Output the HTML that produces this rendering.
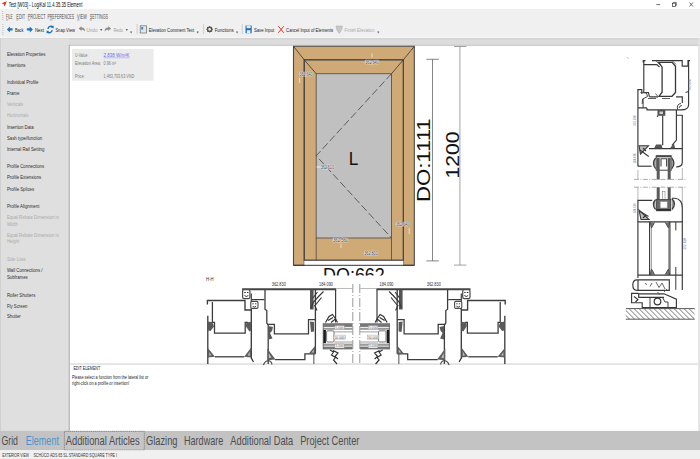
<!DOCTYPE html>
<html><head><meta charset="utf-8"><style>
html,body{margin:0;padding:0;width:700px;height:459px;overflow:hidden;background:#fff}
svg{display:block;font-family:"Liberation Sans",sans-serif}
</style></head><body>
<svg width="700" height="459" viewBox="0 0 700 459">
<rect x="0" y="0" width="700" height="459" fill="#ffffff"/>
<rect x="0" y="0" width="700" height="9" fill="#ffffff"/>
<path d="M1.5 3.2 L6.8 1.2 L4.6 6.8 L3.9 4.2 Z" fill="#e8321e"/>
<line x1="656.3" y1="4.6" x2="660.1" y2="4.6" stroke="#333" stroke-width="0.7"/>
<rect x="672.4" y="3.2" width="3.2" height="3.2" fill="none" stroke="#333" stroke-width="0.7"/><path d="M673.4 3.2 V2.4 H676.4 V5.4 H675.6" fill="none" stroke="#333" stroke-width="0.6"/>
<path d="M689.5 2.5 L693 6.5 M693 2.5 L689.5 6.5" stroke="#333" stroke-width="0.7"/>
<rect x="0" y="9" width="700" height="29" fill="#f0f0f0"/>
<rect x="2.2" y="11" width="1" height="1" fill="#b8b8b8"/>
<rect x="2.2" y="13" width="1" height="1" fill="#b8b8b8"/>
<rect x="2.2" y="15" width="1" height="1" fill="#b8b8b8"/>
<rect x="2.2" y="17" width="1" height="1" fill="#b8b8b8"/>
<rect x="2.2" y="19" width="1" height="1" fill="#b8b8b8"/>
<rect x="2.4" y="24" width="1" height="1" fill="#b8b8b8"/>
<rect x="2.4" y="26" width="1" height="1" fill="#b8b8b8"/>
<rect x="2.4" y="28" width="1" height="1" fill="#b8b8b8"/>
<rect x="2.4" y="30" width="1" height="1" fill="#b8b8b8"/>
<rect x="2.4" y="32" width="1" height="1" fill="#b8b8b8"/>
<rect x="2.4" y="34" width="1" height="1" fill="#b8b8b8"/>
<rect x="6" y="19.7" width="2.2" height="0.55" fill="#666"/>
<rect x="16.3" y="19.7" width="2.1" height="0.55" fill="#666"/>
<rect x="27.8" y="19.7" width="2.4" height="0.55" fill="#666"/>
<rect x="49.8" y="19.7" width="2.6" height="0.55" fill="#666"/>
<rect x="77.1" y="19.7" width="2.5" height="0.55" fill="#666"/>
<rect x="89.7" y="19.7" width="2.3" height="0.55" fill="#666"/>
<path d="M6.9 29.4 L10 26.4 V28.3 H12.6 V30.5 H10 V32.4 Z" fill="#1e73be"/>
<path d="M32.9 29.4 L29.8 26.4 V28.3 H26.9 V30.5 H29.8 V32.4 Z" fill="#1e73be"/>
<path d="M48 29 A3 3 0 0 1 53 27" fill="none" stroke="#1e73be" stroke-width="1.4"/><path d="M53.5 25.4 L53.6 28.4 L50.8 27.6 Z" fill="#1e73be"/><path d="M52.2 30.2 A3 3 0 0 1 47.2 32" fill="none" stroke="#1e73be" stroke-width="1.4"/><path d="M46.6 33.4 L46.6 30.6 L49.4 31.4 Z" fill="#1e73be"/>
<path d="M78.6 28.5 L81.5 26.2 V27.6 C84 27.6 85.2 29 85 31.8 C84.3 30.2 83.2 29.8 81.5 29.8 V31 Z" fill="#8e8e8e"/>
<path d="M100 29.3 L102.4 29.3 L101.2 30.8 Z" fill="#333"/>
<path d="M111.1 28.5 L108.2 26.2 V27.6 C105.7 27.6 104.5 29 104.7 31.8 C105.4 30.2 106.5 29.8 108.2 29.8 V31 Z" fill="#8e8e8e"/>
<path d="M125.6 29.3 L128 29.3 L126.8 30.8 Z" fill="#333"/>
<path d="M130.2 32.2 L132 32.2 L131.1 33.4 Z" fill="#444"/><rect x="130.3" y="31.2" width="1.6" height="0.5" fill="#444"/>
<g fill="#c4c4c4"><rect x="136.7" y="24" width="0.8" height="10"/></g>
<rect x="140.2" y="25.8" width="6.4" height="7.2" fill="#dfe8f0" stroke="#6a6a6a" stroke-width="0.7"/><rect x="141.2" y="27" width="2" height="2.6" fill="#2e8fd8"/>
<path d="M196.8 32.2 L198.6 32.2 L197.7 33.4 Z" fill="#444"/><rect x="196.9" y="31.2" width="1.6" height="0.5" fill="#444"/>
<rect x="203.3" y="24" width="0.8" height="10" fill="#c4c4c4"/>
<g transform="translate(209.6 29.3)" fill="#555"><rect x="-0.55" y="-3.2" width="1.1" height="1.4" transform="rotate(0)"/><rect x="-0.55" y="-3.2" width="1.1" height="1.4" transform="rotate(45)"/><rect x="-0.55" y="-3.2" width="1.1" height="1.4" transform="rotate(90)"/><rect x="-0.55" y="-3.2" width="1.1" height="1.4" transform="rotate(135)"/><rect x="-0.55" y="-3.2" width="1.1" height="1.4" transform="rotate(180)"/><rect x="-0.55" y="-3.2" width="1.1" height="1.4" transform="rotate(225)"/><rect x="-0.55" y="-3.2" width="1.1" height="1.4" transform="rotate(270)"/><rect x="-0.55" y="-3.2" width="1.1" height="1.4" transform="rotate(315)"/><circle r="2.1" fill="none" stroke="#555" stroke-width="1.4"/></g>
<path d="M236.2 32.2 L238 32.2 L237.1 33.4 Z" fill="#444"/><rect x="236.3" y="31.2" width="1.6" height="0.5" fill="#444"/>
<rect x="241.8" y="24" width="0.8" height="10" fill="#c4c4c4"/>
<rect x="245.5" y="25.6" width="6.2" height="7.6" rx="0.4" fill="#1e6fb8"/><rect x="246.6" y="25.6" width="4" height="2.6" fill="#e8eef5"/><rect x="246.8" y="30.2" width="3.6" height="3" fill="#e8eef5"/>
<path d="M278.3 26.2 L283.8 32.8 M283.8 26.2 L278.3 32.8" stroke="#e03a2a" stroke-width="1"/>
<path d="M336 26 L342.4 26 L341.6 30 L339.2 33.4 L336.8 30 Z" fill="#c8c8c8" stroke="#aaa" stroke-width="0.5"/>
<path d="M377.4 32.2 L379.2 32.2 L378.3 33.4 Z" fill="#444"/><rect x="377.5" y="31.2" width="1.6" height="0.5" fill="#444"/>
<rect x="0" y="37.8" width="700" height="7.8" fill="#dcdcdc"/>
<rect x="0" y="36.7" width="700" height="1" fill="#f8f8f8"/>
<rect x="0" y="38.3" width="700" height="1.1" fill="#d0d0d0"/>
<rect x="69" y="44.9" width="630" height="1" fill="#b4b4b4"/>
<rect x="0" y="38.5" width="69.5" height="392.5" fill="#dfdfdf"/>
<rect x="0" y="38.5" width="1" height="392.5" fill="#d0d0d0"/>
<rect x="68.8" y="44.9" width="1.1" height="386.1" fill="#a4a4a4"/>
<rect x="69.8" y="45.7" width="628.4" height="385.3" fill="#ffffff"/>
<rect x="698.2" y="38" width="1.8" height="393" fill="#e2e2e2"/>
<rect x="72" y="48.9" width="81.6" height="31.8" fill="#ebebeb"/>
<line x1="103.6" y1="57.8" x2="129.6" y2="57.8" stroke="#8a8af5" stroke-width="0.45"/>
<rect x="69.8" y="363.4" width="628.4" height="1.3" fill="#d8d8d8"/>
<rect x="0" y="430.9" width="700" height="19.4" fill="#c3c3c3"/>
<rect x="64.4" y="431.4" width="79.9" height="18.8" fill="#c6c6c6" stroke="#6a6a6a" stroke-width="0.7" stroke-dasharray="1.2 0.7"/>
<rect x="0" y="450.3" width="700" height="8.7" fill="#f0f0f0"/>
<path d="M293.5 46.3 H414.3 V265.3 H403.3 V59.9 H304.3 V265.3 H293.5 Z" fill="#d0aa76" stroke="#484848" stroke-width="1.1"/>
<rect x="304.3" y="260.2" width="99" height="5.1" fill="#ffffff"/>
<line x1="293.5" y1="265.3" x2="414.3" y2="265.3" stroke="#333" stroke-width="1"/>
<rect x="304.3" y="59.9" width="99" height="200.3" fill="#d0aa76" stroke="#484848" stroke-width="1.3"/>
<rect x="316.2" y="73.7" width="75.3" height="164.3" fill="#c0c0c0" stroke="#555" stroke-width="0.9"/>
<path d="M316.2 238 V260.2 M391.5 238 V260.2" stroke="#484848" stroke-width="0.8"/>
<path d="M293.5 46.3 L304.3 59.9 M414.3 46.3 L403.3 59.9 M304.3 59.9 L316.2 73.7 M403.3 59.9 L391.5 73.7" stroke="#333" stroke-width="0.8"/>
<path d="M391.5 73.7 L316.2 155.8 L391.5 238" fill="none" stroke="#444" stroke-width="0.8" stroke-dasharray="7.5 3"/>
<line x1="372" y1="53.5" x2="372" y2="57.5" stroke="#fff" stroke-width="0.6"/>
<line x1="299.6" y1="78" x2="299.6" y2="83" stroke="#fff" stroke-width="0.6"/>
<line x1="316.5" y1="167" x2="320.5" y2="167" stroke="#fff" stroke-width="0.8"/>
<line x1="409.2" y1="228" x2="409.2" y2="234" stroke="#fff" stroke-width="0.6"/>
<line x1="341" y1="243.5" x2="341" y2="248" stroke="#fff" stroke-width="0.6"/>
<path d="M432.5 59.3 V260.9 M426.4 59.3 H438.8 M426.4 260.9 H438.8" stroke="#666" stroke-width="0.8"/>
<path d="M459.9 46.5 V265.1 M454 46.5 H466.4 M454 265.1 H466.4" stroke="#8a8a8a" stroke-width="0.8"/>
<defs><clipPath id="c662"><rect x="300" y="262" width="100" height="13.6"/></clipPath></defs>
<g id="hhL"><path d="M207.4 304.6 V300.5 H245 V310 H251.3 V358 L253.5 362" fill="none" stroke="#3c3c3c" stroke-width="1.36"/>
<path d="M207.8 315.8 V364" fill="none" stroke="#3c3c3c" stroke-width="1.32"/>
<path d="M212.4 302 V322.3 H214.5 V333.2 H245.2 V322.5 H248" fill="none" stroke="#3c3c3c" stroke-width="1.28"/>
<path d="M214.9 356.8 H244.3" fill="none" stroke="#3c3c3c" stroke-width="1.28"/>
<path d="M207.8 321.5 L212.4 322.3 L214 326.5 L210.5 331 L208 330.5 Z M251.2 321.8 L246.6 322.5 L245.6 326 L249.4 331.5 L251.2 330.5 Z" fill="#5a5a5a"/>
<path d="M207.8 348 L215 356.8 L207.8 357.6 Z M251.2 347.5 L244.2 356.8 L251.2 357.6 Z" fill="#5e5e5e"/>
<path d="M209.2 352 L211.5 355.5 L209.2 355.8 Z M249.8 351.5 L247.6 355.4 L249.8 355.8 Z" fill="#bdbdbd"/>
<path d="M242.1 289.3 H336.2" stroke="#444" stroke-width="2"/>
<rect x="242.6" y="289.6" width="7.3" height="9" rx="1.6" fill="#fff" stroke="#4a4a4a" stroke-width="1.2"/>
<path d="M244.2 292.5 h1.6 M247 292.5 h1.4 M244.5 295.5 Q246.2 297.5 248.3 295.5" fill="none" stroke="#333" stroke-width="1"/>
<path d="M251.3 293.6 V310" stroke="#3c3c3c" stroke-width="1.2"/>
<rect x="250.8" y="301.4" width="7.2" height="7" rx="1.2" fill="#fff" stroke="#4a4a4a" stroke-width="1.1"/>
<path d="M252.4 303.8 h1.4 M255 303.8 h1.4 M252.6 306.2 Q254.3 308 256.2 306.2" fill="none" stroke="#333" stroke-width="0.9"/>
<path d="M251.3 299.6 H264.4" stroke="#3c3c3c" stroke-width="1.2"/>
<path d="M265 289.5 V309.2 L266.8 310.5 V323 L268.2 325 V364" fill="none" stroke="#3c3c3c" stroke-width="1.28"/>
<path d="M315.4 289 V353.8" stroke="#3c3c3c" stroke-width="1.32"/>
<path d="M313.8 353.8 V364" stroke="#777" stroke-width="1.3"/>
<path d="M267.3 324.4 H274.4 V333.8 H308.5 V319.6 H315.4" fill="none" stroke="#3c3c3c" stroke-width="1.28"/>
<path d="M268.5 326 L273 327 L272 331 L270 333 L272.5 338.5 L268.5 339.5 Z M310 321.5 L314 322 L314 331.5 L311 332 L310.5 327 Z" fill="#5a5a5a"/>
<path d="M274.9 359.6 H304.9 V353.8 H315.4" fill="none" stroke="#3c3c3c" stroke-width="1.28"/>
<path d="M267.3 348.5 L275.5 359.6 L267.3 360.3 Z M315.4 345.6 L308.6 353.8 L315.4 353.8 Z" fill="#5e5e5e"/>
<path d="M268.8 353 L271.5 357.8 L268.8 358 Z M313.8 349.5 L311.5 352.6 L313.8 352.6 Z" fill="#c0c0c0"/>
<path d="M263.5 365 Q265 360.5 268.5 360.8 Q271.5 361 272 364.5" fill="none" stroke="#444" stroke-width="1.1"/>
<path d="M310 290 H313.6 V309.5 H310 Z" fill="#555"/>
<path d="M311 308 L313.5 302 L319 296 L323.5 291.5 M313 298 L317.5 292 M315.5 305 L321.5 297.5 M317 310.5 L314.5 305" fill="none" stroke="#3a3a3a" stroke-width="1.2"/>
<path d="M335.6 289.5 V322.6" stroke="#3c3c3c" stroke-width="1.2"/>
<rect x="323.2" y="323.2" width="29.4" height="26.2" fill="#fff"/>
<rect x="323.2" y="323.2" width="29.4" height="3.7" fill="#777"/><rect x="323.2" y="327.8" width="29.4" height="2" fill="#9a9a9a"/>
<rect x="323.2" y="343.6" width="29.4" height="2.2" fill="#9a9a9a"/><rect x="323.2" y="346.6" width="29.4" height="2.8" fill="#777"/>
<rect x="334.2" y="331" width="18.4" height="1.6" fill="#c4c4c4"/><rect x="334.2" y="341.2" width="18.4" height="1.6" fill="#c4c4c4"/>
<rect x="323.2" y="330" width="2.7" height="13.1" fill="#1a1a1a"/>
<rect x="326.6" y="330.8" width="7.4" height="11.2" rx="1.2" fill="#fff" stroke="#666" stroke-width="0.9"/>
<path d="M323.2 323.2 V349.4" stroke="#555" stroke-width="0.8"/>
<path d="M325.5 322.5 L329 316.5 L332.5 314.5 L335 318 L337.5 322.5 M328 320.5 L333 317.5 M331 322.5 L335.5 319" fill="none" stroke="#333" stroke-width="1.2"/>
<path d="M330 350 L333.5 352 L331.5 355 L335.5 357.5 L333.5 360 L337 364 M333 350.5 L338 353 L335 356.5 L338 359" fill="none" stroke="#333" stroke-width="1.2"/>
<path d="M336.2 288.5 H352.4" stroke="#aaa" stroke-width="0.8"/>
<path d="M352.8 284 V364" stroke="#999" stroke-width="1" stroke-dasharray="9 2 1 2"/></g>
<use href="#hhL" transform="matrix(-1 0 0 1 712.6 0)"/>
<rect x="334.9" y="325.6" width="9.4" height="4" fill="#fff" stroke="#888" stroke-width="0.4"/>
<rect x="333.9" y="335.1" width="11.4" height="4" fill="#fff" stroke="#888" stroke-width="0.4"/>
<rect x="334.9" y="344.0" width="9.4" height="4" fill="#fff" stroke="#888" stroke-width="0.4"/>
<rect x="368.3" y="325.6" width="9.4" height="4" fill="#fff" stroke="#888" stroke-width="0.4"/>
<rect x="367.3" y="335.1" width="11.4" height="4" fill="#fff" stroke="#888" stroke-width="0.4"/>
<rect x="368.3" y="344.0" width="9.4" height="4" fill="#fff" stroke="#888" stroke-width="0.4"/>
<path d="M643.2 62.6 V60.6 H645.5 M652 60.6 H682.2 V66.1 H688 V60.6 H690 M688.6 60.6 V104.7 Q688.6 109.9 681 109.9 H647 V107.9" fill="none" stroke="#383838" stroke-width="1.15"/>
<path d="M643.8 60.6 V92.5 H648.5 L649.5 96.8" fill="none" stroke="#383838" stroke-width="1.15"/>
<path d="M643.8 64.6 H656.8 L659.5 67" fill="none" stroke="#383838" stroke-width="1.15"/>
<path d="M658.8 62.4 H672.1 L675.5 66.2 V92.5 L672 96.3 H659 L662.1 92.2 V67.2 Z" fill="none" stroke="#383838" stroke-width="1.3"/>
<path d="M656 60.8 L660 65 M657.5 96 L655.5 93.5 M672.5 61 L676 64.5" stroke="#555" stroke-width="0.9"/>
<path d="M649.5 96.8 H658 M676 96.8 H682.3 V103" fill="none" stroke="#383838" stroke-width="1.15"/>
<path d="M685.5 92.5 L688.5 91.5" stroke="#444" stroke-width="1.2"/>
<path d="M648 98.5 H656 M662 98.5 H670" stroke="#383838" stroke-width="0.8"/>
<path d="M677.5 109.5 Q676.5 104 681 103.5 M679 108 Q679.5 105.5 682 105.5" fill="none" stroke="#444" stroke-width="1"/>
<path d="M637.9 166.2 V89.6 H641.8 V94 M637.9 107.9 H647" fill="none" stroke="#383838" stroke-width="1.15"/>
<path d="M640.5 92.5 L646.5 93 L647.5 96.5 L642.5 99 L642.2 104 M643.1 99 V107.9" fill="none" stroke="#444" stroke-width="1"/>
<path d="M657.5 110 H665.3 V115.8 H657.5 Z" fill="#505050"/><rect x="659.5" y="111.5" width="3.5" height="2.6" fill="#cfcfcf"/>
<path d="M662.7 115.5 V145.3 M657.5 115.5 V117" stroke="#383838" stroke-width="1.15"/>
<path d="M676.4 110 V140 L672 145.3 M676.4 115.2 H682.3 V162.3 Q682.3 167 676 167" fill="none" stroke="#383838" stroke-width="1.15"/>
<path d="M649 148.6 H682.3" stroke="#383838" stroke-width="1.15"/>
<path d="M654.2 148.2 L656 144.5 H661.5 L662.5 148.2 Z M669.9 148.2 L674 143.5 L675.1 148.2 Z" fill="#555"/>
<path d="M639 145.8 L648.5 145.8 L640.5 154 Z" fill="#bdbdbd" stroke="#3a3a3a" stroke-width="1.1"/><path d="M640 150 L648.8 156.5 M643 148 L646 151" stroke="#3a3a3a" stroke-width="1.1"/>
<path d="M637.9 166.2 H651.6" stroke="#383838" stroke-width="1.15"/>
<rect x="656.2" y="155.8" width="15" height="14.4" fill="#fff" stroke="#444" stroke-width="1"/>
<rect x="656.2" y="155.5" width="15" height="1.8" fill="#444"/>
<path d="M661 166.5 V158.8 H666.6 V166.5" fill="none" stroke="#444" stroke-width="1.1"/>
<path d="M655.6 158 Q651.2 163.2 655.6 168.6 M671.8 158 Q676.2 163.2 671.8 168.6" fill="#9a9a9a" stroke="#3a3a3a" stroke-width="1.2"/>
<path d="M658.2 158 V179.4 M669.2 158 V179.4 M658.2 187.2 V209 M669.2 187.2 V209" stroke="#5a5a5a" stroke-width="3"/>
<path d="M637.9 170 V179 M637.9 187.5 V200 M682.3 168 V179 M682.3 187.5 V208" stroke="#888" stroke-width="0.6"/>
<path d="M634 179.4 H686 M634 187.2 H686" stroke="#8a8a8a" stroke-width="0.7" stroke-dasharray="5 1.4 1 1.4"/>
<rect x="662.4" y="191.5" width="2.6" height="8.5" fill="#fff" stroke="#888" stroke-width="0.6"/>
<rect x="656.6" y="199.5" width="14.2" height="11.3" fill="#6a6a6a" stroke="#444" stroke-width="0.8"/>
<rect x="660.2" y="201.6" width="7" height="6.4" fill="#fff" stroke="#999" stroke-width="0.6"/>
<rect x="656.6" y="209" width="14.2" height="1.8" fill="#2e2e2e"/>
<path d="M655.6 199.5 Q651 204.5 655.6 209.5 M671.8 198.5 Q677 203.5 672 209.5" fill="#9a9a9a" stroke="#3a3a3a" stroke-width="1.2"/>
<path d="M652.2 200.3 H637.9 V278 M672 198.2 H675 Q682.3 199 682.3 208 V290" fill="none" stroke="#383838" stroke-width="1.15"/>
<path d="M639 210 L641 219.5 L649 219.5 Z" fill="#bdbdbd" stroke="#3a3a3a" stroke-width="1.1"/><path d="M639.5 211 L648.5 216.5 M643 218 L646 215" stroke="#3a3a3a" stroke-width="1.1"/>
<path d="M637.9 221.8 H682.3" stroke="#383838" stroke-width="1.15"/>
<path d="M649.6 221.8 V275.1 M669.9 221.8 V275.1" stroke="#383838" stroke-width="1.15"/>
<path d="M650 222 L651.5 228 L654.5 222.5 M669.5 222 L668.5 228 L665.2 222.5 M650 275 L651.5 269 L654.5 274.5 M669.5 275 L668.5 269 L665.2 274.5" fill="#777" stroke="#444" stroke-width="0.9"/>
<path d="M651.5 228 V269 M668.5 228 V269" stroke="#666" stroke-width="0.6"/>
<path d="M675.8 222 V230.4 M675.8 267 V289.8" stroke="#383838" stroke-width="1"/>
<path d="M637.9 275.1 H682.3" stroke="#383838" stroke-width="1.3"/>
<path d="M637 279.8 H669.3 V290.4 H637 Q632.8 290.4 632.8 285 Q632.8 279.8 637 279.8 Z M638 280 V290.4" fill="#fff" stroke="#383838" stroke-width="1.15"/>
<path d="M645.5 283 L646.5 285 M656 282 L659 287.5 L662 283 L665 289 M650 286.5 L652 283" fill="none" stroke="#555" stroke-width="0.9"/>
<path d="M638.7 293.3 H631.6 V302.7 H642.2 V307.6 H676.4 V299.2 L664 293.8 H638.7 V297.4 H664" fill="none" stroke="#383838" stroke-width="1.15"/>
<circle cx="657.5" cy="301.5" r="3.3" fill="#fff" stroke="#383838" stroke-width="1.2"/>
<path d="M650 298 V307.5 M662.8 298 L665 302 H668 V307.5" fill="none" stroke="#444" stroke-width="1"/>
<path d="M634 296.5 L638 299.5 L635.5 302" fill="none" stroke="#333" stroke-width="1.1"/>
<path d="M664 292 L667 289 M660 295 L657.5 292" stroke="#555" stroke-width="0.9"/>
<defs><clipPath id="floor"><rect x="625.8" y="308.6" width="68.8" height="10.6"/></clipPath></defs>
<g clip-path="url(#floor)"><path d="M614.0 308.6 L624.6 319.2 M619.0 308.6 L629.6 319.2 M624.0 308.6 L634.6 319.2 M629.0 308.6 L639.6 319.2 M634.0 308.6 L644.6 319.2 M639.0 308.6 L649.6 319.2 M644.0 308.6 L654.6 319.2 M649.0 308.6 L659.6 319.2 M654.0 308.6 L664.6 319.2 M659.0 308.6 L669.6 319.2 M664.0 308.6 L674.6 319.2 M669.0 308.6 L679.6 319.2 M674.0 308.6 L684.6 319.2 M679.0 308.6 L689.6 319.2 M684.0 308.6 L694.6 319.2 M689.0 308.6 L699.6 319.2 M694.0 308.6 L704.6 319.2" stroke="#4a4a4a" stroke-width="0.75"/></g>
<path d="M625.8 308.6 H694.6 M625.8 319.2 H694.6" stroke="#444" stroke-width="0.9"/>
<path d="M627.2 57.4 L628.4 58.6" stroke="#7a8aa0" stroke-width="0.8"/>
<text x="8.70" y="6.90" font-size="6.6" fill="#0a0a0a" textLength="73.60" lengthAdjust="spacingAndGlyphs" >Test [W03] - LogiKal 11.4.35.35 Element</text>
<text x="6.00" y="19.00" font-size="6.5" fill="#505050" textLength="6.50" lengthAdjust="spacingAndGlyphs" >FILE</text>
<text x="16.30" y="19.00" font-size="6.5" fill="#505050" textLength="8.90" lengthAdjust="spacingAndGlyphs" >EDIT</text>
<text x="27.80" y="19.00" font-size="6.5" fill="#505050" textLength="17.70" lengthAdjust="spacingAndGlyphs" >PROJECT</text>
<text x="47.40" y="19.00" font-size="6.5" fill="#505050" textLength="26.70" lengthAdjust="spacingAndGlyphs" >PREFERENCES</text>
<text x="77.10" y="19.00" font-size="6.5" fill="#505050" textLength="9.80" lengthAdjust="spacingAndGlyphs" >VIEW</text>
<text x="89.70" y="19.00" font-size="6.5" fill="#505050" textLength="18.30" lengthAdjust="spacingAndGlyphs" >SETTINGS</text>
<text x="14.90" y="31.50" font-size="5.8" fill="#1e1e1e" textLength="8.50" lengthAdjust="spacingAndGlyphs" >Back</text>
<text x="34.90" y="31.50" font-size="5.8" fill="#1e1e1e" textLength="9.10" lengthAdjust="spacingAndGlyphs" >Next</text>
<text x="55.40" y="31.50" font-size="5.8" fill="#1e1e1e" textLength="19.50" lengthAdjust="spacingAndGlyphs" >Snap View</text>
<text x="86.60" y="31.50" font-size="5.8" fill="#a0a0a0" textLength="10.80" lengthAdjust="spacingAndGlyphs" >Undo</text>
<text x="113.40" y="31.50" font-size="5.8" fill="#a0a0a0" textLength="9.70" lengthAdjust="spacingAndGlyphs" >Redo</text>
<text x="148.70" y="31.50" font-size="5.8" fill="#1e1e1e" textLength="45.40" lengthAdjust="spacingAndGlyphs" >Elevation Comment Text</text>
<text x="214.70" y="31.50" font-size="5.8" fill="#1e1e1e" textLength="18.90" lengthAdjust="spacingAndGlyphs" >Functions</text>
<text x="253.90" y="31.50" font-size="5.8" fill="#1e1e1e" textLength="20.40" lengthAdjust="spacingAndGlyphs" >Save Input</text>
<text x="286.10" y="31.50" font-size="5.8" fill="#1e1e1e" textLength="47.10" lengthAdjust="spacingAndGlyphs" >Cancel Input of Elements</text>
<text x="344.60" y="31.50" font-size="5.8" fill="#a8a8a8" textLength="30.00" lengthAdjust="spacingAndGlyphs" >Finish Elevation</text>
<text x="75.00" y="57.00" font-size="5.4" fill="#7a7a7a" textLength="13.50" lengthAdjust="spacingAndGlyphs" >U-Value:</text>
<text x="103.60" y="57.00" font-size="5.4" fill="#6a6af0" textLength="26.00" lengthAdjust="spacingAndGlyphs" >2.838 W/m²K</text>
<text x="75.00" y="64.90" font-size="5.4" fill="#7a7a7a" textLength="26.00" lengthAdjust="spacingAndGlyphs" >Elevation Area:</text>
<text x="103.60" y="64.90" font-size="5.4" fill="#7a7a7a" textLength="12.40" lengthAdjust="spacingAndGlyphs" >0.96 m²</text>
<text x="75.00" y="78.40" font-size="5.4" fill="#7a7a7a" textLength="9.50" lengthAdjust="spacingAndGlyphs" >Price:</text>
<text x="103.60" y="78.40" font-size="5.4" fill="#7a7a7a" textLength="30.50" lengthAdjust="spacingAndGlyphs" >1,463,703.63 VND</text>
<text x="6.90" y="55.60" font-size="6.1" fill="#2e2e2e" textLength="38.43" lengthAdjust="spacingAndGlyphs" >Elevation Properties</text>
<text x="6.90" y="67.00" font-size="6.1" fill="#2e2e2e" textLength="18.62" lengthAdjust="spacingAndGlyphs" >Insertions</text>
<text x="6.90" y="84.30" font-size="6.1" fill="#2e2e2e" textLength="31.51" lengthAdjust="spacingAndGlyphs" >Individual Profile</text>
<text x="6.90" y="95.10" font-size="6.1" fill="#2e2e2e" textLength="12.41" lengthAdjust="spacingAndGlyphs" >Frame</text>
<text x="6.90" y="106.40" font-size="6.1" fill="#ababab" textLength="16.23" lengthAdjust="spacingAndGlyphs" >Verticals</text>
<text x="6.90" y="117.40" font-size="6.1" fill="#ababab" textLength="21.48" lengthAdjust="spacingAndGlyphs" >Horizontals</text>
<text x="6.90" y="128.80" font-size="6.1" fill="#2e2e2e" textLength="26.74" lengthAdjust="spacingAndGlyphs" >Insertion Data</text>
<text x="6.90" y="139.80" font-size="6.1" fill="#2e2e2e" textLength="35.33" lengthAdjust="spacingAndGlyphs" >Sash type/function</text>
<text x="6.90" y="150.90" font-size="6.1" fill="#2e2e2e" textLength="37.48" lengthAdjust="spacingAndGlyphs" >Internal Rail Setting</text>
<text x="6.90" y="168.40" font-size="6.1" fill="#2e2e2e" textLength="37.24" lengthAdjust="spacingAndGlyphs" >Profile Connections</text>
<text x="6.90" y="179.20" font-size="6.1" fill="#2e2e2e" textLength="34.37" lengthAdjust="spacingAndGlyphs" >Profile Extensions</text>
<text x="6.90" y="190.70" font-size="6.1" fill="#2e2e2e" textLength="27.21" lengthAdjust="spacingAndGlyphs" >Profile Splices</text>
<text x="6.90" y="208.30" font-size="6.1" fill="#2e2e2e" textLength="32.46" lengthAdjust="spacingAndGlyphs" >Profile Alignment</text>
<text x="6.90" y="219.40" font-size="6.1" fill="#ababab" textLength="52.04" lengthAdjust="spacingAndGlyphs" >Equal Rebate Dimension in</text>
<text x="6.90" y="226.10" font-size="6.1" fill="#ababab" textLength="10.98" lengthAdjust="spacingAndGlyphs" >Width</text>
<text x="6.90" y="236.50" font-size="6.1" fill="#ababab" textLength="52.04" lengthAdjust="spacingAndGlyphs" >Equal Rebate Dimension in</text>
<text x="6.90" y="243.30" font-size="6.1" fill="#ababab" textLength="12.41" lengthAdjust="spacingAndGlyphs" >Height</text>
<text x="6.90" y="261.30" font-size="6.1" fill="#ababab" textLength="18.86" lengthAdjust="spacingAndGlyphs" >Side Lites</text>
<text x="6.90" y="272.30" font-size="6.1" fill="#2e2e2e" textLength="35.64" lengthAdjust="spacingAndGlyphs" >Wall Connections /</text>
<text x="6.90" y="279.20" font-size="6.1" fill="#2e2e2e" textLength="20.77" lengthAdjust="spacingAndGlyphs" >Subframes</text>
<text x="6.90" y="296.60" font-size="6.1" fill="#2e2e2e" textLength="28.40" lengthAdjust="spacingAndGlyphs" >Roller Shutters</text>
<text x="6.90" y="307.60" font-size="6.1" fill="#2e2e2e" textLength="20.52" lengthAdjust="spacingAndGlyphs" >Fly Screen</text>
<text x="6.90" y="318.40" font-size="6.1" fill="#2e2e2e" textLength="13.85" lengthAdjust="spacingAndGlyphs" >Shutter</text>
<text x="73.40" y="370.30" font-size="5.2" fill="#1e1e1e" textLength="26.90" lengthAdjust="spacingAndGlyphs" >EDIT ELEMENT</text>
<text x="72.00" y="379.40" font-size="5.0" fill="#1e1e1e" textLength="76.30" lengthAdjust="spacingAndGlyphs" >Please select a function from the lateral list or</text>
<text x="72.00" y="385.10" font-size="5.0" fill="#1e1e1e" textLength="57.40" lengthAdjust="spacingAndGlyphs" >right-click on a profile or insertion!</text>
<text x="1.40" y="445.10" font-size="11.9" fill="#4e4e4e" textLength="16.60" lengthAdjust="spacingAndGlyphs" >Grid</text>
<text x="25.70" y="445.10" font-size="11.9" fill="#4a94cc" textLength="33.30" lengthAdjust="spacingAndGlyphs" >Element</text>
<text x="65.70" y="445.10" font-size="11.9" fill="#4e4e4e" textLength="74.00" lengthAdjust="spacingAndGlyphs" >Additional Articles</text>
<text x="146.00" y="445.10" font-size="11.9" fill="#4e4e4e" textLength="31.50" lengthAdjust="spacingAndGlyphs" >Glazing</text>
<text x="184.00" y="445.10" font-size="11.9" fill="#4e4e4e" textLength="39.30" lengthAdjust="spacingAndGlyphs" >Hardware</text>
<text x="230.30" y="445.10" font-size="11.9" fill="#4e4e4e" textLength="63.00" lengthAdjust="spacingAndGlyphs" >Additional Data</text>
<text x="300.20" y="445.10" font-size="11.9" fill="#4e4e4e" textLength="59.20" lengthAdjust="spacingAndGlyphs" >Project Center</text>
<text x="2.20" y="457.20" font-size="4.6" fill="#333" textLength="26.60" lengthAdjust="spacingAndGlyphs" >EXTERIOR VIEW</text>
<text x="33.40" y="457.20" font-size="4.6" fill="#333" textLength="83.60" lengthAdjust="spacingAndGlyphs" >SCHÜCO ADS 65 SL STANDARD SQUARE TYPE I</text>
<text x="348.80" y="165.30" font-size="19" fill="#111" textLength="9.60" lengthAdjust="spacingAndGlyphs" >L</text>
<text x="365.30" y="63.50" font-size="4.6" fill="#2a2a3a" textLength="13.40" lengthAdjust="spacingAndGlyphs" stroke="#ffffff" stroke-width="0.7" paint-order="stroke" stroke-linejoin="round">362.640</text>
<text x="299.50" y="76.10" font-size="4.6" fill="#2a2a3a" textLength="12.90" lengthAdjust="spacingAndGlyphs" stroke="#ffffff" stroke-width="0.7" paint-order="stroke" stroke-linejoin="round">362.640</text>
<text x="320.80" y="168.70" font-size="4.6" fill="#2a2a3a" textLength="13.10" lengthAdjust="spacingAndGlyphs" stroke="#ffffff" stroke-width="0.7" paint-order="stroke" stroke-linejoin="round">362.610</text>
<text x="396.10" y="225.70" font-size="4.6" fill="#2a2a3a" textLength="12.80" lengthAdjust="spacingAndGlyphs" stroke="#ffffff" stroke-width="0.7" paint-order="stroke" stroke-linejoin="round">362.640</text>
<text x="333.00" y="241.70" font-size="4.6" fill="#2a2a3a" textLength="15.10" lengthAdjust="spacingAndGlyphs" stroke="#ffffff" stroke-width="0.7" paint-order="stroke" stroke-linejoin="round">362.560</text>
<text x="364.30" y="254.70" font-size="4.6" fill="#2a2a3a" textLength="13.40" lengthAdjust="spacingAndGlyphs" stroke="#ffffff" stroke-width="0.7" paint-order="stroke" stroke-linejoin="round">362.800</text>
<text x="0.00" y="0.00" font-size="19" fill="#111" textLength="83.70" lengthAdjust="spacingAndGlyphs" transform="translate(430.3 202) rotate(-90)">DO:1111</text>
<text x="0.00" y="0.00" font-size="19" fill="#111" textLength="47.00" lengthAdjust="spacingAndGlyphs" transform="translate(459.2 178.4) rotate(-90)">1200</text>
<text x="323.00" y="282.00" font-size="19.5" fill="#111" textLength="61.80" lengthAdjust="spacingAndGlyphs" clip-path="url(#c662)">DO:662</text>
<text x="206.10" y="281.20" font-size="4.6" fill="#333" textLength="7.60" lengthAdjust="spacingAndGlyphs" >H-H</text>
<text x="271.80" y="285.70" font-size="4.6" fill="#2a2a3a" textLength="14.00" lengthAdjust="spacingAndGlyphs" >362.830</text>
<text x="319.00" y="285.70" font-size="4.6" fill="#2a2a3a" textLength="14.00" lengthAdjust="spacingAndGlyphs" >184.090</text>
<text x="379.50" y="285.70" font-size="4.6" fill="#2a2a3a" textLength="14.00" lengthAdjust="spacingAndGlyphs" >184.090</text>
<text x="426.80" y="285.70" font-size="4.6" fill="#2a2a3a" textLength="14.00" lengthAdjust="spacingAndGlyphs" >362.830</text>
<text x="335.50" y="329.00" font-size="3.6" fill="#555" textLength="8.20" lengthAdjust="spacingAndGlyphs" >5.000</text>
<text x="334.50" y="338.50" font-size="3.6" fill="#555" textLength="10.20" lengthAdjust="spacingAndGlyphs" >50.000</text>
<text x="335.50" y="347.40" font-size="3.6" fill="#555" textLength="8.20" lengthAdjust="spacingAndGlyphs" >5.000</text>
<text x="368.90" y="329.00" font-size="3.6" fill="#555" textLength="8.20" lengthAdjust="spacingAndGlyphs" >5.000</text>
<text x="367.90" y="338.50" font-size="3.6" fill="#555" textLength="10.20" lengthAdjust="spacingAndGlyphs" >50.000</text>
<text x="368.90" y="347.40" font-size="3.6" fill="#555" textLength="8.20" lengthAdjust="spacingAndGlyphs" >5.000</text>
<text x="0.00" y="0.00" font-size="3.4" fill="#7a7aa0" textLength="10.70" lengthAdjust="spacingAndGlyphs" transform="translate(635.6 125.7) rotate(-90)">362.830</text>
<text x="0.00" y="0.00" font-size="3.4" fill="#7a7aa0" textLength="10.60" lengthAdjust="spacingAndGlyphs" transform="translate(635.6 163.6) rotate(-90)">184.090</text>
<text x="0.00" y="0.00" font-size="3.4" fill="#7a7aa0" textLength="10.40" lengthAdjust="spacingAndGlyphs" transform="translate(635.8 213.4) rotate(-90)">184.090</text>
<text x="0.00" y="0.00" font-size="3.4" fill="#7a7aa0" textLength="11.40" lengthAdjust="spacingAndGlyphs" transform="translate(685.6 249.4) rotate(-90)">362.830</text>
<text x="0.00" y="0.00" font-size="3.4" fill="#7a7aa0" textLength="11.00" lengthAdjust="spacingAndGlyphs" transform="translate(690.6 90.3) rotate(-90)">362.830</text>
</svg></body></html>
